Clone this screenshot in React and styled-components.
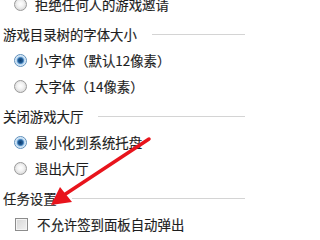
import React from "react";
import styled, { createGlobalStyle, css } from "styled-components";

const Global = createGlobalStyle`
  html, body { margin: 0; padding: 0; background: #fff; }
  body { font-family: "Noto Sans CJK SC", "Noto Sans", sans-serif; }
`;

const Page = styled.div`
  position: relative;
  width: 245px;
  height: 233px;
  overflow: hidden;
  background: #fff;
`;

const Content = styled.div`
  display: flex;
  flex-direction: column;
  margin-top: -9px;
  color: #1e1e1e;
  font-size: 13.4px;
  -webkit-text-stroke: 0.15px #1e1e1e;
`;

const Heading = styled.div`
  display: flex;
  align-items: center;
  height: 26px;
  margin-top: 4px;
  padding-left: 3px;
  gap: 15px;
  white-space: nowrap;
  &::after {
    content: "";
    flex: 1;
    height: 1px;
    background: #d4d4d4;
  }
`;

const Row = styled.label`
  display: flex;
  align-items: center;
  height: 26px;
  padding-left: ${(p) => p.$indent || 14}px;
  gap: ${(p) => p.$gap || 8}px;
  white-space: nowrap;
`;

const Radio = styled.span`
  box-sizing: border-box;
  width: 13px;
  height: 13px;
  border-radius: 50%;
  flex: none;
  ${(p) =>
    p.$checked
      ? css`
          border: 1px solid #5e8fbb;
          background: radial-gradient(
            circle at 50% 50%,
            #0f3c6e 0,
            #1f5a94 2.2px,
            #5a93c8 3.2px,
            #b9d7f0 4px,
            #e6f1fb 5.5px
          );
        `
      : css`
          border: 1px solid #9a9a9a;
          background: radial-gradient(
            circle at 50% 45%,
            #ffffff 0,
            #f3f3f3 3px,
            #dcdcdc 6px
          );
        `}
`;

const Checkbox = styled.span`
  box-sizing: border-box;
  width: 13px;
  height: 13px;
  flex: none;
  border: 1px solid #8c8c8c;
  background: linear-gradient(135deg, #d6d6d6, #f2f2f2);
  box-shadow: inset 0 0 0 1px #f4f4f4;
`;

const Overlay = styled.svg`
  position: absolute;
  left: 0;
  top: 0;
  pointer-events: none;
`;

export default function App() {
  return (
    <Page>
      <Global />
      <Content>
        <Row>
          <Radio />
          拒绝任何人的游戏邀请
        </Row>
        <Heading>游戏目录树的字体大小</Heading>
        <Row>
          <Radio $checked />
          小字体（默认12像素）
        </Row>
        <Row>
          <Radio />
          大字体（14像素）
        </Row>
        <Heading>关闭游戏大厅</Heading>
        <Row>
          <Radio $checked />
          最小化到系统托盘
        </Row>
        <Row>
          <Radio />
          退出大厅
        </Row>
        <Heading>任务设置</Heading>
        <Row $indent={15} $gap={9}>
          <Checkbox />
          不允许签到面板自动弹出
        </Row>
      </Content>
      <Overlay width="245" height="233" viewBox="0 0 245 233">
        <line
          x1="149"
          y1="139"
          x2="64"
          y2="195"
          stroke="#e8141c"
          strokeWidth="3.5"
          strokeLinecap="round"
        />
        <polygon points="51,205 60,187 72,202" fill="#e8141c" />
      </Overlay>
    </Page>
  );
}
